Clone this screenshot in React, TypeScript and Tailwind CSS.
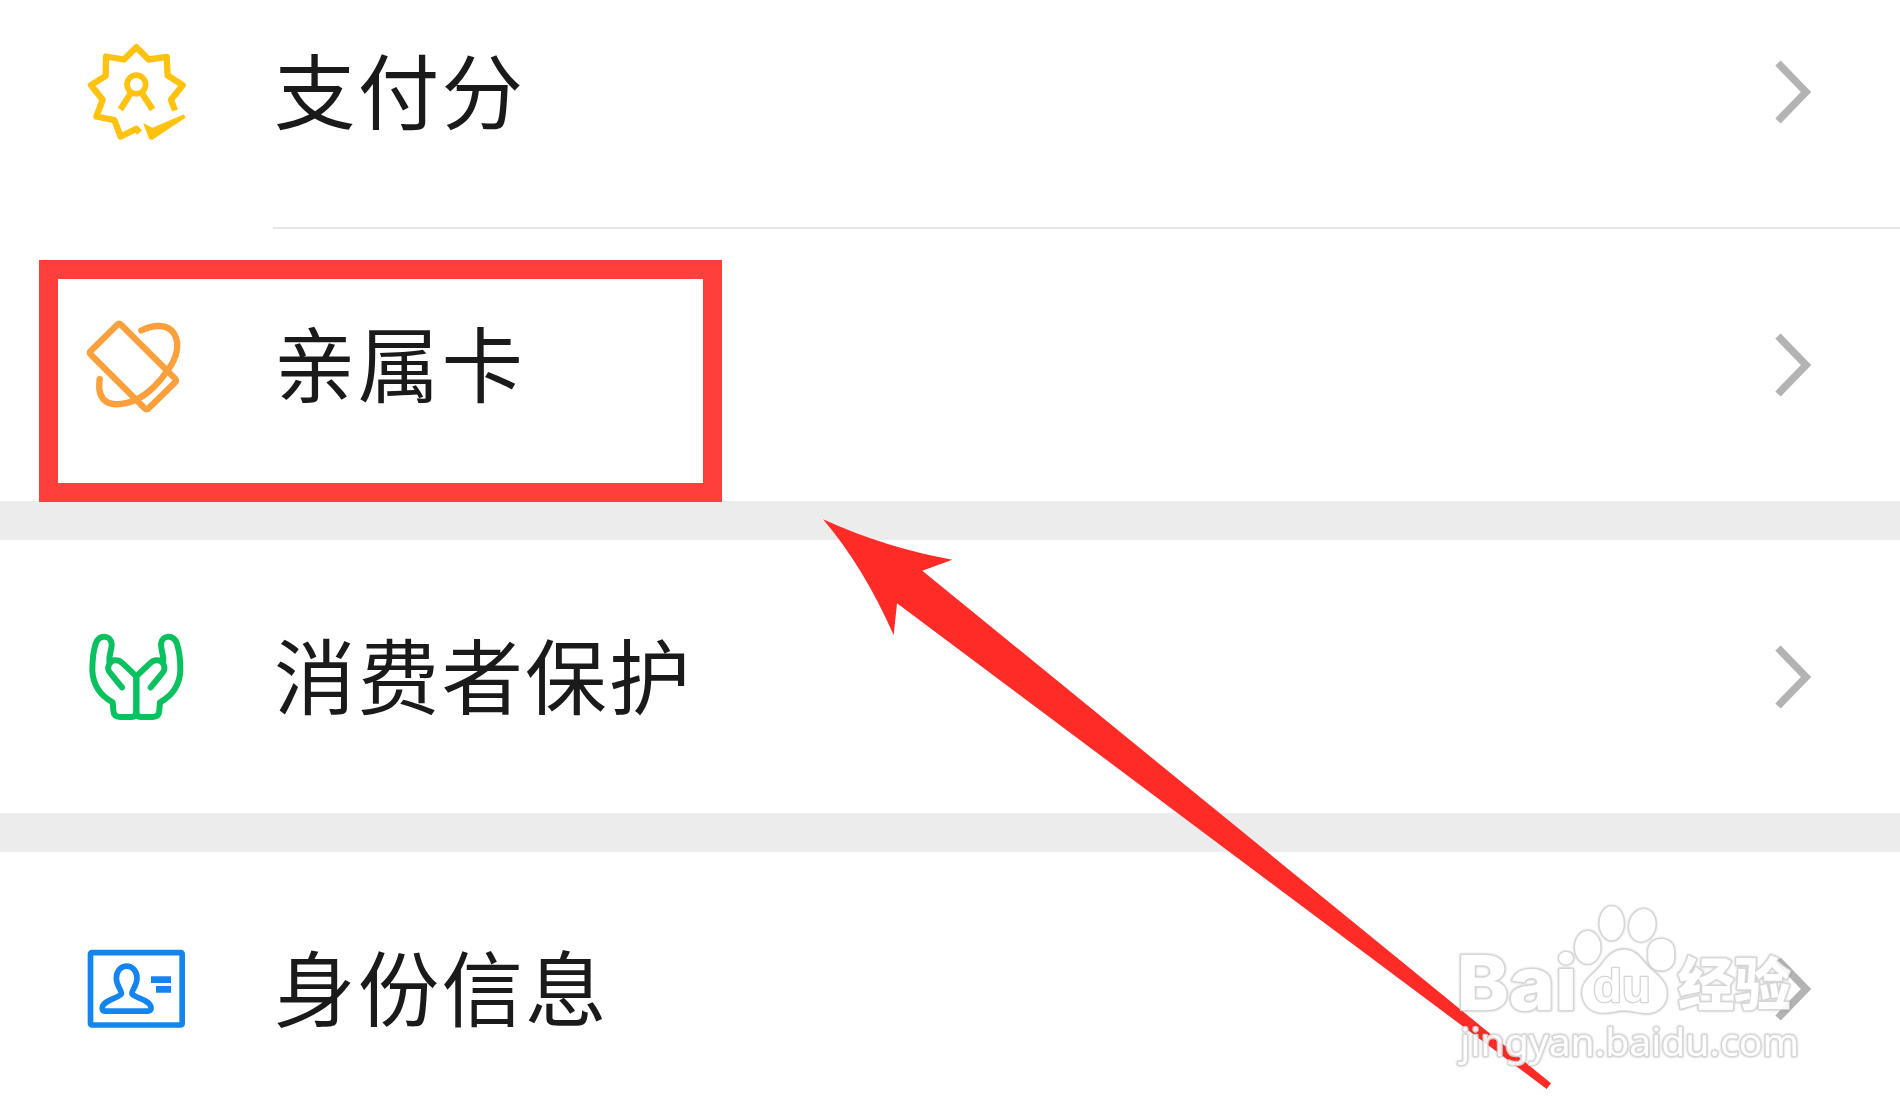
import type { ReactNode } from 'react';

function PayScoreIcon() {
  return (
    <svg viewBox="0 4.5 390 360" className="w-[130px] h-[120px] flex-shrink-0" fill="none" stroke="#ffc30f" strokeLinejoin="round">
      <path
        d="M315 240L303 208L338 164L293 135L290 79L236 87L199 50L162 87L108 78L107 136L63 164L98 208L79 258L133 269L152 318L199 295L209 306"
        strokeWidth="19"
      />
      <circle cx="199" cy="162" r="28" strokeWidth="17" />
      <path d="M183 187L151 237M215 187L248 237" strokeWidth="19" />
      <path d="M223 281L247 294L341 254L344 261L246 326L239 324Z" fill="#ffc30f" strokeWidth="4" />
    </svg>
  );
}

function FamilyCardIcon() {
  return (
    <svg viewBox="0 -1.5 390 360" className="w-[130px] h-[120px] flex-shrink-0" fill="none" stroke="#fba03c" strokeWidth="19" strokeLinejoin="round" strokeLinecap="round">
      <path d="M142 58Q147 51 153 58L315 219Q321 225 315 231L236 308Q230 315 224 308L63 148Q57 142 63 136Z" />
      <path d="M214 75C250 57 293 54 312 84C332 118 319 160 293 194C271 229 233 267 197 283C160 299 119 303 100 281C85 263 87 241 89 221" />
    </svg>
  );
}

function HandsIcon() {
  const hand =
    'M199 168L159 130C146 116 126 117 118 130C111 145 115 152 124 162L156 201M118 122C117 101 126 88 125 70C121 43 87 42 77 70C70 91 67 116 67 150C69 200 94 227 128 246L130 270C131 285 138 290 150 290H184Q199 290 199 275V168';
  return (
    <svg viewBox="0 -10 390 360" className="w-[130px] h-[120px] flex-shrink-0" fill="none" stroke="#0ac160" strokeWidth="18" strokeLinejoin="round" strokeLinecap="round">
      <path d={hand} />
      <path d={hand} transform="translate(398 0) scale(-1 1)" />
    </svg>
  );
}

function IdentityIcon() {
  return (
    <svg viewBox="0 -4.5 390 360" className="w-[130px] h-[120px] flex-shrink-0" fill="none" stroke="#1485ee" strokeWidth="17" strokeLinejoin="round">
      <rect x="61.500" y="66.500" width="275" height="217" rx="4" />
      <path d="M154 190C156 178 139 167 139 143C139 95 201 95 201 143C201 167 184 178 186 190C195 203 238 206 243 230C244 238 241 242 234 242H105C98 242 95 238 97 230C102 208 145 203 154 190Z" />
      <path d="M243 147.500H303M258 176.500H303" strokeWidth="20" />
    </svg>
  );
}

function Chevron() {
  return (
    <svg viewBox="0 0 40 66" className="w-[40px] h-[66px] mr-[86px] flex-shrink-0" fill="none" stroke="#b3b3b3" strokeWidth="7.5">
      <path d="M4 4L32 33L4 62" />
    </svg>
  );
}

function Row({ icon, label, divider }: { icon: ReactNode; label: string; divider?: boolean }) {
  return (
    <div className="relative h-[273px] flex-shrink-0 flex items-center pl-[70px]">
      {icon}
      <span className="ml-[74px] pb-[8px] flex-1 text-[81.5px] leading-none tracking-[2.2px] text-[#1a1a1a]">{label}</span>
      <Chevron />
      {divider && <div className="absolute left-[273px] right-0 -bottom-px h-[2px] bg-[#e6e6e6]" />}
    </div>
  );
}

function Arrow() {
  return (
    <svg viewBox="0 0 1900 1108" className="absolute inset-0 w-[1900px] h-[1108px] pointer-events-none">
      <path
        d="M823 519.300Q886 548 952.300 559.700L922.300 570.700L1551 1083.300L1546.700 1089L897 603.300L893.700 635.300Q863.500 566.700 823 519.300Z"
        fill="#ff2b27"
      />
    </svg>
  );
}

function Watermark() {
  return (
    <svg
      viewBox="0 0 1170 630"
      className="absolute left-[1440px] top-[890px] w-[390px] h-[210px] pointer-events-none opacity-90 drop-shadow-[0_0_1px_rgba(0,0,0,0.25)]"
      fill="#fff"
      stroke="#d2d2d2"
      strokeWidth="8"
      paintOrder="stroke"
      strokeLinejoin="round"
    >
      <text x="50" y="361" fontSize="225" textLength="362" lengthAdjust="spacingAndGlyphs" className="font-['Inter',sans-serif] font-extrabold">
        Bai
      </text>
      <ellipse cx="443" cy="172" rx="38" ry="49" />
      <ellipse cx="515" cy="100" rx="36" ry="51" />
      <ellipse cx="607" cy="106" rx="39" ry="49" transform="rotate(12 607 106)" />
      <rect x="625" y="147" width="77" height="94" rx="36" />
      <path d="M552 179C590 180 603 208 628 235C653 258 680 275 680 310C680 350 650 373 610 369C580 365 570 361 550 361C530 361 518 368 490 368C450 368 427 340 427 305C429 270 460 255 480 230C500 204 515 180 552 179Z" />
      <text x="460" y="337" fontSize="140" textLength="172" lengthAdjust="spacingAndGlyphs" className="font-['Liberation_Sans',sans-serif] font-bold">
        du
      </text>
      <text x="713" y="346" fontSize="170" textLength="340" lengthAdjust="spacingAndGlyphs" className="font-['Noto_Sans_CJK_SC',sans-serif] font-black">
        经验
      </text>
      <text x="61" y="498" fontSize="116" textLength="1016" lengthAdjust="spacingAndGlyphs" className="font-['Noto_Sans',sans-serif]">
        jingyan.baidu.com
      </text>
    </svg>
  );
}

export default function App() {
  return (
    <div className="relative w-[1900px] h-[1108px] overflow-hidden bg-white font-['Noto_Sans_CJK_SC',sans-serif]">
      {/* The list is scrolled, so the first row starts above the top edge */}
      <div className="-mt-[45px] flex flex-col">
        <Row icon={<PayScoreIcon />} label="支付分" divider />
        <Row icon={<FamilyCardIcon />} label="亲属卡" />
        <div className="h-[39px] flex-shrink-0 bg-[#ececec]" />
        <Row icon={<HandsIcon />} label="消费者保护" />
        <div className="h-[39px] flex-shrink-0 bg-[#ececec]" />
        <Row icon={<IdentityIcon />} label="身份信息" />
      </div>

      {/* Annotations */}
      <div className="absolute left-[39px] top-[260px] w-[683px] h-[242px] border-[19px] border-[#ff3f3c]" />
      <Arrow />
      <Watermark />
    </div>
  );
}
